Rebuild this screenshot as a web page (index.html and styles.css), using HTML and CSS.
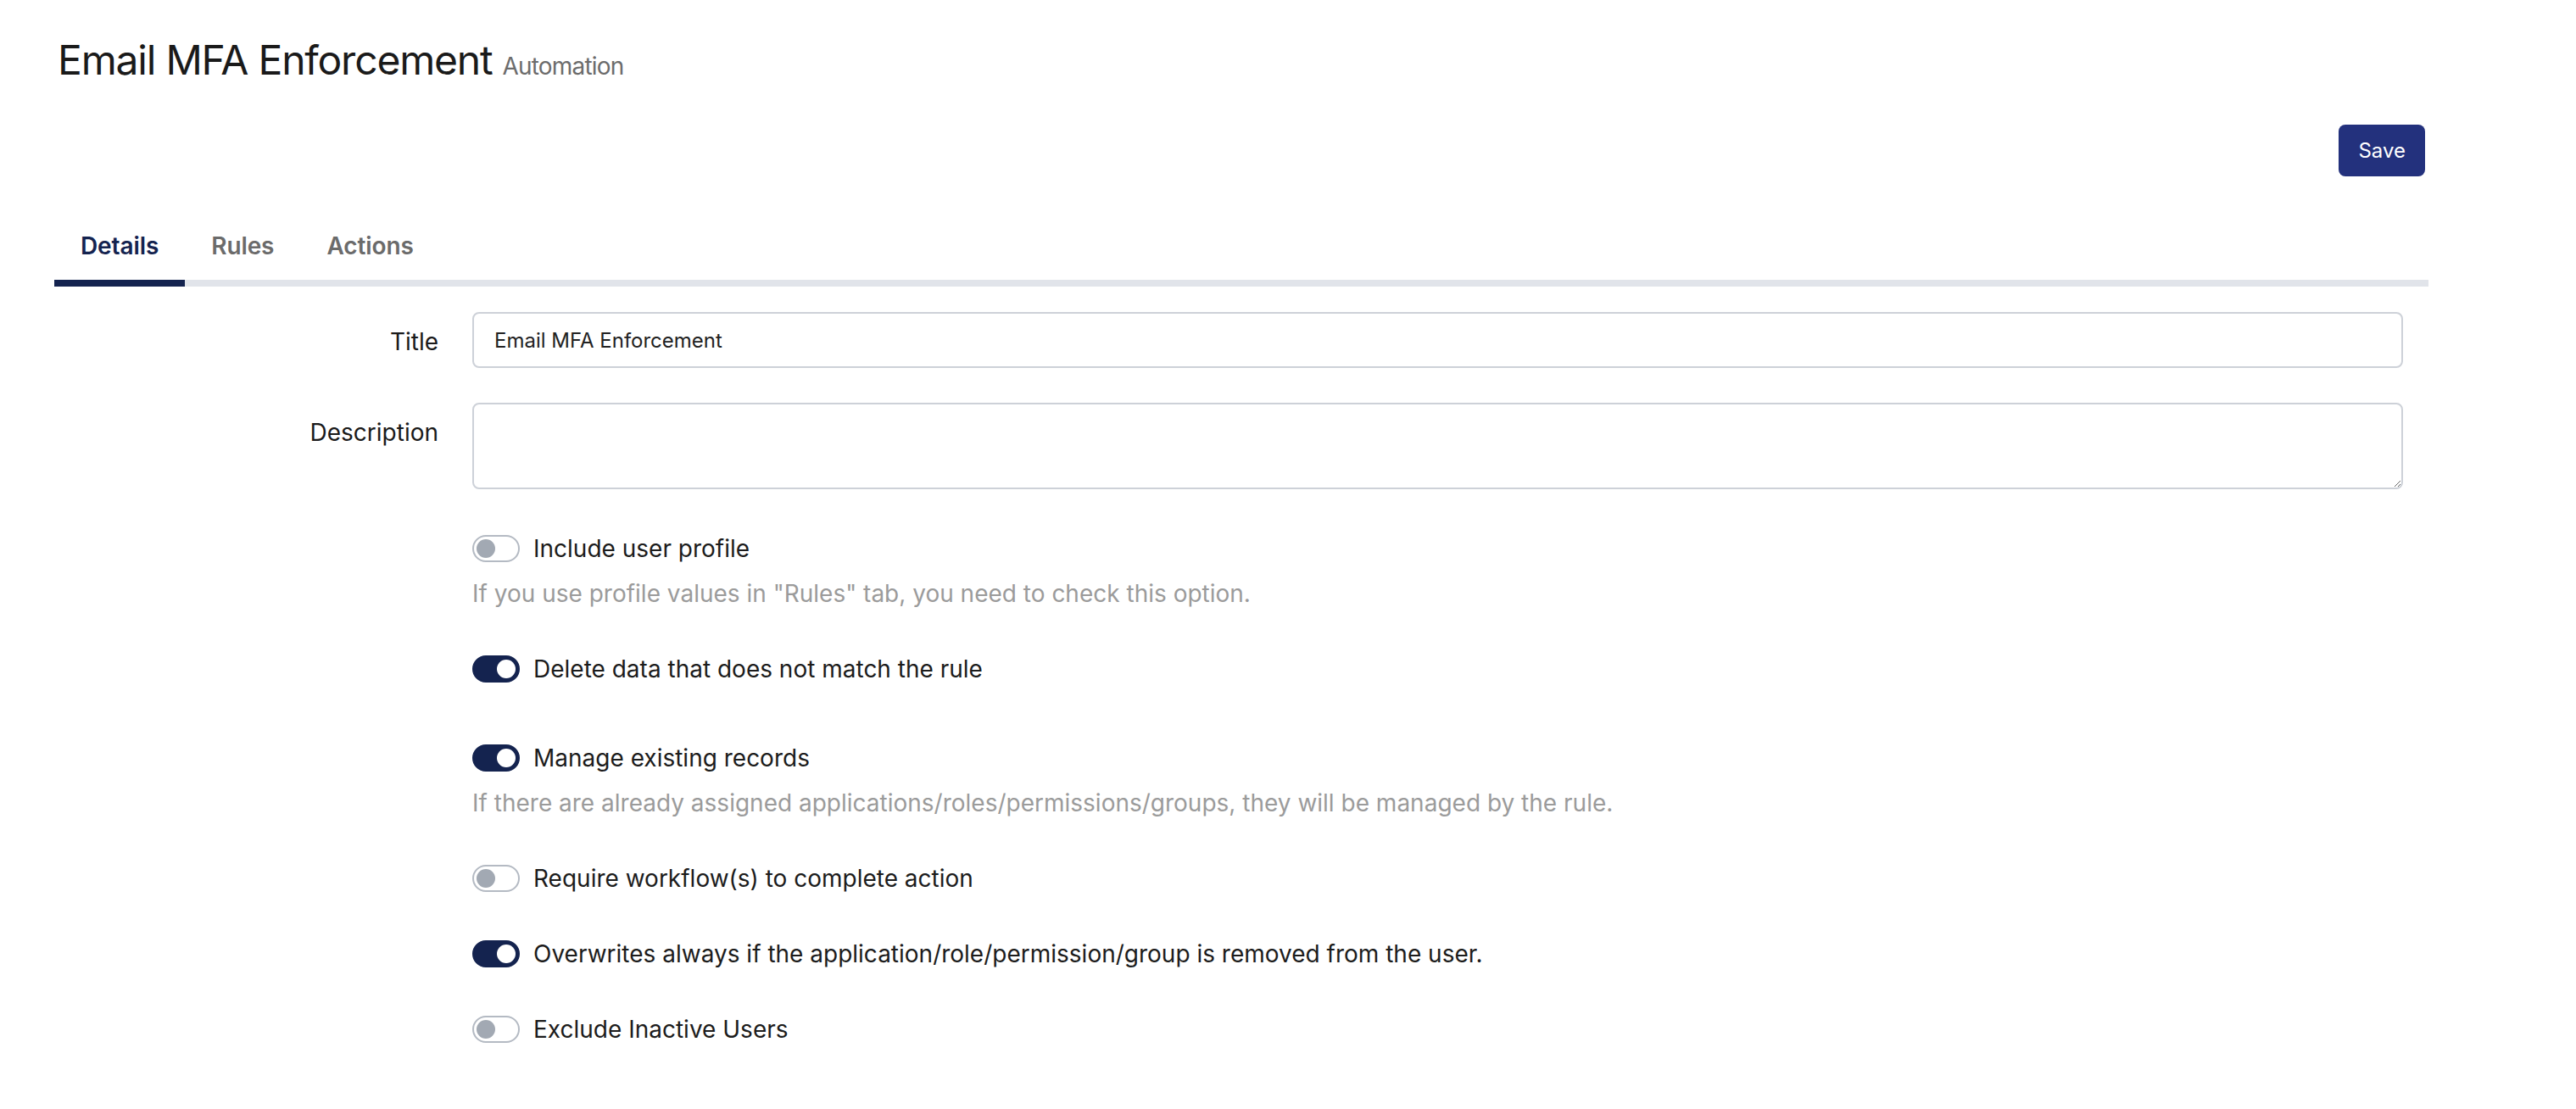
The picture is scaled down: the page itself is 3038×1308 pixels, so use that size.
FILE: index.html
```html
<!DOCTYPE html>
<html lang="en">
<head>
  <meta charset="UTF-8" />
  <title>Email MFA Enforcement - Automation</title>
  <link rel="stylesheet" href="styles.css">
</head>
<body>

  <div class="page">
    <div class="page-head">
      <h1>Email MFA Enforcement</h1>
      <span class="subtitle">Automation</span>
    </div>

    <div class="toolbar">
      <button type="button" class="btn-save">Save</button>
    </div>

    <ul class="tabs">
      <li class="tab active">Details</li>
      <li class="tab">Rules</li>
      <li class="tab">Actions</li>
    </ul>

    <form class="form">
      <label class="form-label" for="title">Title</label>
      <input class="form-input" id="title" type="text" value="Email MFA Enforcement">

      <label class="form-label" for="description">Description</label>
      <textarea class="form-input form-textarea" id="description"></textarea>

      <!-- switches -->
      <div class="options">
        <div class="option">
          <label class="switch-row">
            <span class="switch"></span>
            <span>Include user profile</span>
          </label>
          <div class="hint">If you use profile values in "Rules" tab, you need to check this option.</div>
        </div>

        <div class="option option-extra">
          <label class="switch-row">
            <span class="switch on"></span>
            <span>Delete data that does not match the rule</span>
          </label>
        </div>

        <div class="option">
          <label class="switch-row">
            <span class="switch on"></span>
            <span>Manage existing records</span>
          </label>
          <div class="hint">If there are already assigned applications/roles/permissions/groups, they will be managed by the rule.</div>
        </div>

        <div class="option">
          <label class="switch-row">
            <span class="switch"></span>
            <span>Require workflow(s) to complete action</span>
          </label>
        </div>

        <div class="option">
          <label class="switch-row">
            <span class="switch on"></span>
            <span>Overwrites always if the application/role/permission/group is removed from the user.</span>
          </label>
        </div>

        <div class="option">
          <label class="switch-row">
            <span class="switch"></span>
            <span>Exclude Inactive Users</span>
          </label>
        </div>
      </div>
    </form>
  </div>

</body>
</html>
```

FILE: styles.css
```css
body {
  margin: 0;
  font-family: Inter, "Noto Sans", sans-serif;
  background: #fff;
  color: #1c1c1c;
}

.page {
  width: 2800px;
  padding: 0 64px;
}

/* Заголовок сторінки */
.page-head {
  display: flex;
  align-items: baseline;
  gap: 12px;
  padding: 42px 0 0 4px;
}
.page-head h1 {
  margin: 0;
  font-size: 48px;
  line-height: 58px;
  font-weight: 400;
  letter-spacing: -1.2px;
  color: #1a1a1a;
}
.subtitle {
  font-size: 28px;
  letter-spacing: -0.8px;
  color: #6c6c6c;
}

.toolbar {
  display: flex;
  justify-content: flex-end;
  margin-top: 47px;
  padding-right: 4px;
}
.btn-save {
  font-family: inherit;
  font-size: 24px;
  line-height: 29px;
  padding: 16px 23px;
  border: 0;
  border-radius: 8px;
  background: #23317d;
  color: #fff;
}

/* Вкладки */
.tabs {
  display: flex;
  list-style: none;
  margin: 44px 0 0;
  padding: 0;
  border-bottom: 8px solid #e1e4ea;
}
.tab {
  padding: 18px 31px 20px;
  font-size: 28px;
  line-height: 40px;
  font-weight: 600;
  letter-spacing: -0.1px;
  color: #6b6b6b;
}
.tab.active {
  color: #14234f;
  border-bottom: 8px solid #14234f;
  margin-bottom: -8px;
}

/* Форма */
.form {
  display: grid;
  grid-template-columns: 453px 1fr;
  column-gap: 40px;
  row-gap: 41px;
  width: 2770px;
  margin-top: 30px;
}
.form-label {
  text-align: right;
  padding-top: 15px;
  font-size: 28px;
  line-height: 40px;
  color: #1a1a1a;
}
.form-input {
  box-sizing: border-box;
  height: 66px;
  padding: 0 24px;
  border: 2px solid #cdd1d8;
  border-radius: 8px;
  font-family: inherit;
  font-size: 24px;
  color: #222;
}
.form-textarea {
  height: 102px;
  resize: vertical;
}

.options {
  grid-column: 2;
  margin-top: 9px;
}
.option {
  margin-bottom: 49px;
}
.option-extra {
  margin-bottom: 65px;
}
.switch-row {
  display: flex;
  align-items: center;
  gap: 16px;
  font-size: 28px;
  line-height: 40px;
  color: #1c1c1c;
}
.switch {
  box-sizing: border-box;
  position: relative;
  width: 56px;
  height: 32px;
  border: 2px solid #b4bac3;
  border-radius: 16px;
  background: #fff;
  flex-shrink: 0;
}
.switch::after {
  content: "";
  position: absolute;
  top: 3px;
  left: 3px;
  width: 22px;
  height: 22px;
  border-radius: 50%;
  background: #a2a9b3;
}
.switch.on {
  background: #14234f;
  border-color: #14234f;
}
.switch.on::after {
  left: 27px;
  background: #fff;
}
.hint {
  margin-top: 13px;
  font-size: 28px;
  line-height: 40px;
  color: #9b9b9b;
}
```
